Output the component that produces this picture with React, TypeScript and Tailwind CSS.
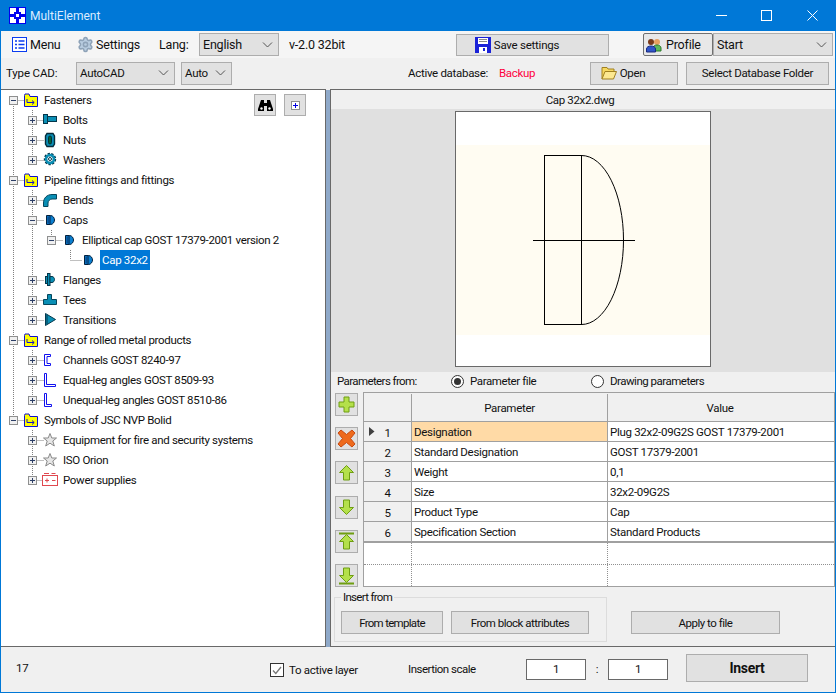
import type { ReactNode } from 'react'
import { Settings } from 'lucide-react'

type IconName = 'folder' | 'bolt' | 'nut' | 'washer' | 'bend' | 'cap' | 'flange' | 'tee' | 'transition' | 'channel' | 'angle' | 'angle2' | 'star' | 'power'

type TreeNode = {
  label: string
  icon: IconName
  open?: boolean
  leaf?: boolean
  selected?: boolean
  children?: TreeNode[]
}

const tree: TreeNode[] = [
  {
    label: 'Fasteners',
    icon: 'folder',
    open: true,
    children: [
      { label: 'Bolts', icon: 'bolt' },
      { label: 'Nuts', icon: 'nut' },
      { label: 'Washers', icon: 'washer' },
    ],
  },
  {
    label: 'Pipeline fittings and fittings',
    icon: 'folder',
    open: true,
    children: [
      { label: 'Bends', icon: 'bend' },
      {
        label: 'Caps',
        icon: 'cap',
        open: true,
        children: [
          {
            label: 'Elliptical cap GOST 17379-2001 version 2',
            icon: 'cap',
            open: true,
            children: [{ label: 'Cap 32x2', icon: 'cap', leaf: true, selected: true }],
          },
        ],
      },
      { label: 'Flanges', icon: 'flange' },
      { label: 'Tees', icon: 'tee' },
      { label: 'Transitions', icon: 'transition' },
    ],
  },
  {
    label: 'Range of rolled metal products',
    icon: 'folder',
    open: true,
    children: [
      { label: 'Channels GOST 8240-97', icon: 'channel' },
      { label: 'Equal-leg angles GOST 8509-93', icon: 'angle' },
      { label: 'Unequal-leg angles GOST 8510-86', icon: 'angle2' },
    ],
  },
  {
    label: 'Symbols of JSC NVP Bolid',
    icon: 'folder',
    open: true,
    children: [
      { label: 'Equipment for fire and security systems', icon: 'star' },
      { label: 'ISO Orion', icon: 'star' },
      { label: 'Power supplies', icon: 'power' },
    ],
  },
]

const params = [
  ['Designation', 'Plug 32x2-09G2S GOST 17379-2001'],
  ['Standard Designation', 'GOST 17379-2001'],
  ['Weight', '0,1'],
  ['Size', '32x2-09G2S'],
  ['Product Type', 'Cap'],
  ['Specification Section', 'Standard Products'],
]

function NodeIcon({ name }: { name: IconName }) {
  const teal = '#0a8fb5'
  const dark = '#04364a'
  const base = { width: 16, height: 16, viewBox: '0 0 16 16' }
  switch (name) {
    case 'folder':
      return (
        <svg {...base}>
          <path d="M1.5 3.5V14.5H14.5V4.5H7L6 2H2z" fill="#ffff00" stroke="#1010d0" />
          <path d="M4 7v3.5h7M9 8.5l2.2 2-2.2 2" fill="none" stroke="#1010d0" />
        </svg>
      )
    case 'bolt':
      return (
        <svg {...base}>
          <rect x="1.5" y="2.5" width="4" height="9" fill={teal} stroke={dark} />
          <rect x="5.5" y="4.5" width="9" height="5" fill={teal} stroke={dark} />
        </svg>
      )
    case 'nut':
      return (
        <svg {...base}>
          <path d="M5 1.5h6l1.5 2.5v8L11 14.5H5L3.5 12V4z" fill={teal} stroke="#062b3a" strokeWidth="1.4" />
          <rect x="6.5" y="4" width="3" height="8" rx="1.5" fill="#063" stroke="#062b3a" />
        </svg>
      )
    case 'washer':
      return (
        <svg {...base}>
          <circle cx="8" cy="7" r="4.5" fill="none" stroke={dark} strokeWidth="3.4" strokeDasharray="2 1.1" />
          <circle cx="8" cy="7" r="4" fill="none" stroke={teal} strokeWidth="2.4" />
          <circle cx="8" cy="7" r="1.5" fill="#fff" stroke={dark} />
        </svg>
      )
    case 'bend':
      return (
        <svg {...base}>
          <path d="M1.5 14.5V11C1.5 6 5 2.5 10 2.5H14.5V7H10C8 7 6 9 6 11V14.5z" fill={teal} stroke="#06465c" />
        </svg>
      )
    case 'cap':
      return (
        <svg {...base}>
          <path d="M4.5 3.5H8.5C11 3.5 12.5 6 12.5 8S11 12.5 8.5 12.5H4.5z" fill="#0a7fd0" stroke="#03213f" />
          <path d="M8 3.5V12.5" stroke="#03213f" />
          <path d="M5.5 4.5h2v7h-2z" fill="#0a4f90" />
        </svg>
      )
    case 'flange':
      return (
        <svg {...base}>
          <rect x="3.5" y="4.5" width="2" height="7" fill={teal} stroke={dark} />
          <rect x="5.5" y="1.5" width="2.5" height="12" fill={teal} stroke={dark} />
          <path d="M8 4.5h2C11.5 4.5 12.5 6 12.5 7.500S11.500 10.500 10 10.500H8z" fill={teal} stroke={dark} />
        </svg>
      )
    case 'tee':
      return (
        <svg {...base}>
          <path d="M5.500 2.500H9.500V7.500H14.500V12.500H1.500V7.500H5.500z" fill={teal} stroke="#06465c" />
        </svg>
      )
    case 'transition':
      return (
        <svg {...base}>
          <path d="M3.500 1.500L13.500 7.500L3.500 13.500z" fill={teal} stroke="#05394d" />
          <path d="M5 3v9" stroke="#05394d" />
        </svg>
      )
    case 'channel':
      return (
        <svg {...base}>
          <path d="M2.500 2.500H8.500V4.500H5V11.500H8.500V13.500H2.500z" fill="#fff" stroke="#1111f0" />
        </svg>
      )
    case 'angle':
      return (
        <svg {...base}>
          <path d="M2.500 1.500H4.500V12.500H13.500V14.500H2.500z" fill="#fff" stroke="#1111f0" />
        </svg>
      )
    case 'angle2':
      return (
        <svg {...base}>
          <path d="M2.500 1.500H4.500V12.500H9.500V14.500H2.500z" fill="#fff" stroke="#1111f0" />
        </svg>
      )
    case 'star':
      return (
        <svg {...base}>
          <path d="M8 1.500L9.800 6H14.500L10.800 9L12.300 14L8 11.200L3.700 14L5.200 9L1.500 6H6.200z" fill="#e6e6e6" stroke="#8a8a8a" />
        </svg>
      )
    case 'power':
      return (
        <svg {...base}>
          <rect x="0.500" y="3.500" width="15" height="10" fill="#fff" stroke="#e0484f" />
          <path d="M2 1.500h5M9.500 1.500h4M3 8.500h4M5 6.500v4M10 8.500h3.500" stroke="#e0484f" fill="none" />
        </svg>
      )
  }
}

function Expander({ open }: { open?: boolean }) {
  return (
    <span className="relative block h-[9px] w-[9px] border border-[#8e8f8f] bg-[#f0f0f0]">
      <span className="absolute left-[1px] top-[3px] h-px w-[5px] bg-[#2c3e66]" />
      {!open && <span className="absolute left-[3px] top-[1px] h-[5px] w-px bg-[#2c3e66]" />}
    </span>
  )
}

type FlatRow = {
  node: TreeNode
  level: number
  last: boolean
  rails: boolean[]
}

function flatten(nodes: TreeNode[], level: number, rails: boolean[]): FlatRow[] {
  const rows: FlatRow[] = []
  nodes.forEach((node, i) => {
    const last = i === nodes.length - 1
    rows.push({ node, level, last, rails })
    if (node.children) rows.push(...flatten(node.children, level + 1, [...rails, !last]))
  })
  return rows
}

const rows = flatten(tree, 0, [])

function TreeRow({ row, first }: { row: FlatRow; first: boolean }) {
  const { node, level, last, rails } = row
  const cx = 12.5 + level * 19
  return (
    <div className="relative flex h-5 items-center">
      {/* dotted connectors */}
      <svg className="absolute left-0 top-0" width="110" height="20">
        <g stroke="#808080" strokeDasharray="1 1" fill="none">
          {rails.map((on, i) => (on ? <path key={i} d={`M${12.5 + i * 19} 0V20`} /> : null))}
          <path d={`M${cx} ${first ? 10 : 0}V${last ? 10 : 20}`} />
          <path d={`M${cx} 10.500H${cx + 11}`} />
        </g>
      </svg>
      <div className="relative flex h-5 items-center" style={{ marginLeft: 8 + level * 19 }}>
        <span className="flex h-[9px] w-[9px] shrink-0">{!node.leaf && <Expander open={node.open} />}</span>
        <span className="ml-[5px] flex h-4 w-4 shrink-0 items-center justify-center">
          <NodeIcon name={node.icon} />
        </span>
        {node.selected ? (
          <span className="ml-[4px] flex h-5 w-[50px] items-center bg-[#0078d7] pl-[2px] text-white">{node.label}</span>
        ) : (
          <span className="ml-[5px] whitespace-nowrap tracking-[-0.33px] text-[#101010]">{node.label}</span>
        )}
      </div>
    </div>
  )
}

function Btn({ className, children }: { className: string; children: ReactNode }) {
  return (
    <div className={`flex shrink-0 items-center justify-center border border-[#adadad] bg-[#e1e1e1] ${className}`}>
      {children}
    </div>
  )
}

function Select({ className, value }: { className: string; value: string }) {
  return (
    <div className={`flex shrink-0 items-center justify-between border border-[#adadad] bg-[#e1e1e1] pl-[3px] pr-[5px] ${className}`}>
      <span>{value}</span>
      <svg width="11" height="6" viewBox="0 0 11 6">
        <path d="M1 0.500L5.500 5L10 0.500" fill="none" stroke="#555" />
      </svg>
    </div>
  )
}

function SideBtn({ children }: { children: ReactNode }) {
  return (
    <div className="flex h-[23px] w-[23px] items-center justify-center border border-[#adadad] bg-[#e1e1e1]">{children}</div>
  )
}

function Arrow({ up, bar }: { up?: boolean; bar?: boolean }) {
  return (
    <svg width="17" height="19" viewBox="0 0 17 19" className={up ? '' : 'rotate-180'}>
      {bar && <rect x="1" y="0.500" width="15" height="2" fill="#6f9e12" />}
      <path d="M8.500 2.500L15.500 9.500H11.500V17H5.500V9.500H1.500z" fill="#b4e04a" stroke="#6f9e12" />
    </svg>
  )
}

export default function App() {
  return (
    <div
      className="flex h-[693px] w-[836px] flex-col overflow-hidden border border-t-0 border-[#0078d7] bg-[#f0f0f0] text-[11.5px] leading-[14px] tracking-[-0.3px] text-[#111]"
      style={{ fontFamily: 'Roboto, "Liberation Sans", sans-serif' }}
    >
      {/* Title bar */}
      <div className="flex h-[31px] shrink-0 items-center bg-[#0078d7] pl-[8px] tracking-normal text-[#dcecff]">
        <svg width="17" height="17" viewBox="0 0 17 17">
          <rect width="17" height="17" fill="#0000f0" />
          <path d="M1 1h6v6H1zM10 1h6v6h-6zM1 10h6v6H1zM10 10h6v6h-6z" fill="#fff" />
          <rect x="5" y="5" width="7" height="7" fill="#0000f0" />
          <rect x="7" y="7" width="3" height="3" fill="#fff" />
        </svg>
        <span className="ml-[4px] text-[12px]">MultiElement</span>
        <div className="ml-auto flex items-center pr-[17px]">
          <svg width="11" height="11" viewBox="0 0 11 11">
            <path d="M0 5.500H11" stroke="#fff" />
          </svg>
          <svg width="11" height="11" viewBox="0 0 11 11" className="ml-[34px]">
            <rect x="0.500" y="0.500" width="10" height="10" fill="none" stroke="#fff" />
          </svg>
          <svg width="11" height="11" viewBox="0 0 11 11" className="ml-[35px]">
            <path d="M0.500 0.500L10.500 10.500M10.500 0.500L0.500 10.500" stroke="#fff" />
          </svg>
        </div>
      </div>

      {/* Top toolbar */}
      <div className="flex h-[27px] shrink-0 items-center bg-[#f5f5f5] pl-[11px] text-[12.5px] tracking-[-0.2px]">
        <svg width="15" height="15" viewBox="0 0 15 15">
          <rect x="0.500" y="0.500" width="14" height="14" fill="#fff" stroke="#0a3cf0" />
          <path d="M3 4h2M3 7.500h2M3 11h2M6.500 4h6M6.500 7.500h6M6.500 11h6" stroke="#0a3cf0" strokeWidth="1.500" />
        </svg>
        <span className="ml-[3px] w-[31px]">Menu</span>
        <Settings size={17} strokeWidth={2.2} className="ml-[16px] fill-[#b9cde0] text-[#8fa3b8]" />
        <span className="ml-[2px] w-[43px]">Settings</span>
        <span className="ml-[20px] w-[30px]">Lang:</span>
        <Select className="ml-[10px] h-[23px] w-[80px]" value="English" />
        <span className="ml-[10px] w-[56px] whitespace-nowrap">v-2.0 32bit</span>
        <Btn className="ml-[111px] h-[22px] w-[153px] gap-[3px] pr-[31px] text-[11.5px] tracking-[-0.25px]">
          <svg width="16" height="16" viewBox="0 0 16 16">
            <path d="M0 0H16V16H0z" fill="#1a22d8" />
            <rect x="3" y="1" width="10" height="6" fill="#fff" />
            <path d="M4 2.500h8M4 4.500h8" stroke="#8a8a8a" />
            <rect x="4" y="10" width="8" height="6" fill="#fff" />
            <rect x="8" y="11" width="2" height="3" fill="#1a22d8" />
          </svg>
          Save settings
        </Btn>
        <div className="ml-[34px] flex h-[23px] w-[70px] shrink-0 items-center gap-[4px] rounded-[2px] border border-[#707070] bg-[#e8e8e8] pl-[2px]">
          <svg width="16" height="16" viewBox="0 0 16 16">
            <circle cx="11" cy="5" r="3" fill="#e8a060" />
            <path d="M7 14v-3c0-2 2-3 4-3s4 1 4 3v3z" fill="#5cb85c" stroke="#2a7a2a" />
            <circle cx="5" cy="5" r="3" fill="#7a3a1a" />
            <path d="M0.500 15v-3c0-2 2-3 4.500-3s4.500 1 4.500 3v3z" fill="#2f55c8" stroke="#1a2a80" />
          </svg>
          Profile
        </div>
        <Select className="h-[23px] w-[120px]" value="Start" />
      </div>

      {/* Second toolbar */}
      <div className="flex h-[31px] shrink-0 items-center pb-[1px] pl-[5px]">
        <span className="w-[70px] tracking-[-0.15px]">Type CAD:</span>
        <Select className="h-[23px] w-[99px]" value="AutoCAD" />
        <Select className="ml-[6px] h-[23px] w-[51px]" value="Auto" />
        <span className="ml-[176px] w-[80px] whitespace-nowrap">Active database:</span>
        <span className="ml-[11px] w-[36px] text-[#ff0040]">Backup</span>
        <Btn className="ml-[55px] h-[23px] w-[88px] gap-[3px] pr-[22px]">
          <svg width="16" height="14" viewBox="0 0 16 14">
            <path d="M1 13V1.500H6L7 3H13V5" fill="#f6d860" stroke="#a08020" />
            <path d="M1 13L4 5.500H15.500L12.500 13z" fill="#fce890" stroke="#a08020" />
          </svg>
          Open
        </Btn>
        <Btn className="ml-[8px] h-[23px] w-[143px]">Select Database Folder</Btn>
      </div>

      {/* Main area */}
      <div className="flex h-[558px] shrink-0">
        {/* Tree panel */}
        <div className="relative w-[325px] shrink-0 overflow-hidden border border-l-0 border-[#696969] bg-white">
          <div className="flex flex-col">
            {rows.map((row, i) => (
              <TreeRow key={i} row={row} first={i === 0} />
            ))}
          </div>
          <div className="absolute left-[253px] top-[4px] flex h-[22px] w-[22px] items-center justify-center border border-[#adadad] bg-[#e1e1e1]">
            <svg width="15" height="13" viewBox="0 0 15 13">
              <path d="M3 1h3v3h3V1h3l3 9v2H9V7H6v5H0v-2z" fill="#000" />
              <circle cx="3.500" cy="9.500" r="1.200" fill="#fff" />
              <circle cx="11.500" cy="9.500" r="1.200" fill="#fff" />
            </svg>
          </div>
          <div className="absolute left-[283px] top-[4px] flex h-[22px] w-[22px] items-center justify-center border border-[#adadad] bg-[#e1e1e1]">
            <span className="relative block h-[9px] w-[9px] border border-[#8e8f8f] bg-white">
              <span className="absolute left-[1px] top-[3px] h-px w-[5px] bg-[#0000e0]" />
              <span className="absolute left-[3px] top-[1px] h-[5px] w-px bg-[#0000e0]" />
            </span>
          </div>
        </div>

        {/* Splitter */}
        <div className="mt-px w-[4px] shrink-0 bg-[#8fa9c9]" />

        {/* Right panel */}
        <div className="flex min-w-0 flex-1 flex-col border border-r-0 border-[#696969]">
          <div className="flex h-[19px] shrink-0 items-center justify-center pr-[6px] tracking-[-0.35px]">Cap 32x2.dwg</div>

          <div className="flex h-[263px] shrink-0 justify-center bg-[#e0e0e0] pr-[1px] pt-[2px]">
            <div className="h-[256px] w-[256px] border border-[#696969] bg-white pt-[33px]">
              <div className="h-[190px] w-full bg-[#fffcf2]">
                <svg width="254" height="190" viewBox="0 0 254 190">
                  <g fill="none" stroke="#000" strokeWidth="1">
                    <rect x="88.500" y="10.500" width="37" height="169" />
                    <path d="M77 95.500H179" />
                    <path d="M125.500 10.500A42 84.500 0 0 1 125.500 179.500" />
                  </g>
                </svg>
              </div>
            </div>
          </div>

          <div className="flex h-[20px] shrink-0 items-center pb-[2px] pl-[6px]">
            <span className="w-[114px] tracking-[-0.6px]">Parameters from:</span>
            <span className="flex h-[13px] w-[13px] items-center justify-center rounded-full border border-[#333] bg-white">
              <span className="h-[7px] w-[7px] rounded-full bg-[#333]" />
            </span>
            <span className="ml-[6px] w-[121px] tracking-[-0.4px]">Parameter file</span>
            <span className="h-[13px] w-[13px] rounded-full border border-[#333] bg-white" />
            <span className="ml-[6px] tracking-[-0.5px]">Drawing parameters</span>
          </div>

          <div className="flex h-[195px] shrink-0 pl-[4px]">
            <div className="flex w-[27px] shrink-0 flex-col justify-between pt-[1px]">
              <SideBtn>
                <svg width="17" height="17" viewBox="0 0 17 17">
                  <path d="M6 1h5v5h5v5h-5v5H6v-5H1V6h5z" fill="#b4e04a" stroke="#6f9e12" />
                </svg>
              </SideBtn>
              <SideBtn>
                <svg width="19" height="19" viewBox="0 0 19 19">
                  <path d="M4 1l5.500 4.500L15 1l3 3-4.500 5.500L18 15l-3 3-5.500-4.500L4 18l-3-3 4.500-5.500L1 4z" fill="#ee6a1c" stroke="#c84a10" />
                </svg>
              </SideBtn>
              <SideBtn>
                <Arrow up />
              </SideBtn>
              <SideBtn>
                <Arrow />
              </SideBtn>
              <SideBtn>
                <Arrow up bar />
              </SideBtn>
              <SideBtn>
                <Arrow bar />
              </SideBtn>
            </div>

            <div className="ml-px flex w-[472px] flex-col border border-[#a0a0a0] bg-white">
              <div className="flex h-[29px] shrink-0 border-b border-[#a0a0a0] bg-[#f0f0f0] pt-px">
                <div className="w-[48px] border-r border-[#a0a0a0]" />
                <div className="flex w-[196px] items-center justify-center border-r border-[#a0a0a0]">Parameter</div>
                <div className="flex flex-1 items-center justify-center pr-[2px]">Value</div>
              </div>
              {params.map(([name, value], i) => (
                <div key={name} className="flex h-5 shrink-0 border-b border-[#a0a0a0]">
                  <div className="relative flex w-[48px] items-center justify-center border-r border-[#a0a0a0] bg-[#f0f0f0] pt-[2px]">
                    {i === 0 && (
                      <svg className="absolute left-[5px] top-[5px]" width="6" height="9" viewBox="0 0 6 9">
                        <path d="M0 0L5.500 4.500L0 9z" fill="#404040" />
                      </svg>
                    )}
                    {i + 1}
                  </div>
                  <div className={`flex w-[196px] items-center border-r border-[#a0a0a0] pl-[2px] ${i === 0 ? 'bg-[#ffdaa6]' : ''}`}>{name}</div>
                  <div className="flex flex-1 items-center pl-[2px]">{value}</div>
                </div>
              ))}
              <div className="flex flex-1 border-t border-[#a0a0a0]">
                <div className="w-[48px] border-r border-dotted border-[#909090]" />
                <div className="w-[196px] border-r border-dotted border-[#909090]" />
              </div>
              <div className="flex h-[22px] shrink-0 border-t border-dotted border-[#909090]">
                <div className="w-[48px] border-r border-dotted border-[#909090]" />
                <div className="w-[196px] border-r border-dotted border-[#909090]" />
              </div>
            </div>
          </div>

          <div className="flex flex-1 items-start pl-[3px] pt-[4px] tracking-[-0.5px]">
            <fieldset className="flex h-[51px] w-[273px] shrink-0 gap-[8px] border border-[#dcdcdc] pl-[6px] pt-[8px]">
              <legend className="px-[2px] leading-[12px] tracking-[-0.7px]">Insert from</legend>
              <Btn className="h-[23px] w-[102px] tracking-[-0.7px]">From template</Btn>
              <Btn className="h-[23px] w-[138px]">From block attributes</Btn>
            </fieldset>
            <Btn className="ml-[24px] mt-[20px] h-[23px] w-[149px]">Apply to file</Btn>
          </div>
        </div>
      </div>

      {/* Footer */}
      <div className="flex flex-1 items-center pb-[3px] pl-[15px]">
        <span className="w-[254px]">17</span>
        <span className="mt-[4px] flex h-[14px] w-[14px] items-center justify-center border border-[#333] bg-white">
          <svg width="10" height="9" viewBox="0 0 10 9">
            <path d="M1 4.500L3.800 7.500L9 1" fill="none" stroke="#777" strokeWidth="1.300" />
          </svg>
        </span>
        <span className="ml-[5px] mt-[4px] w-[119px]">To active layer</span>
        <span className="mt-[2px] w-[118px] tracking-[-0.5px]">Insertion scale</span>
        <div className="mt-[2px] flex h-[21px] w-[60px] items-center justify-center border border-[#696969] bg-white">1</div>
        <span className="mt-[2px] w-[22px] text-center">:</span>
        <div className="mt-[2px] flex h-[21px] w-[60px] items-center justify-center border border-[#696969] bg-white">1</div>
        <Btn className="ml-[18px] h-[28px] w-[122px] text-[14px] font-bold">Insert</Btn>
      </div>
    </div>
  )
}
